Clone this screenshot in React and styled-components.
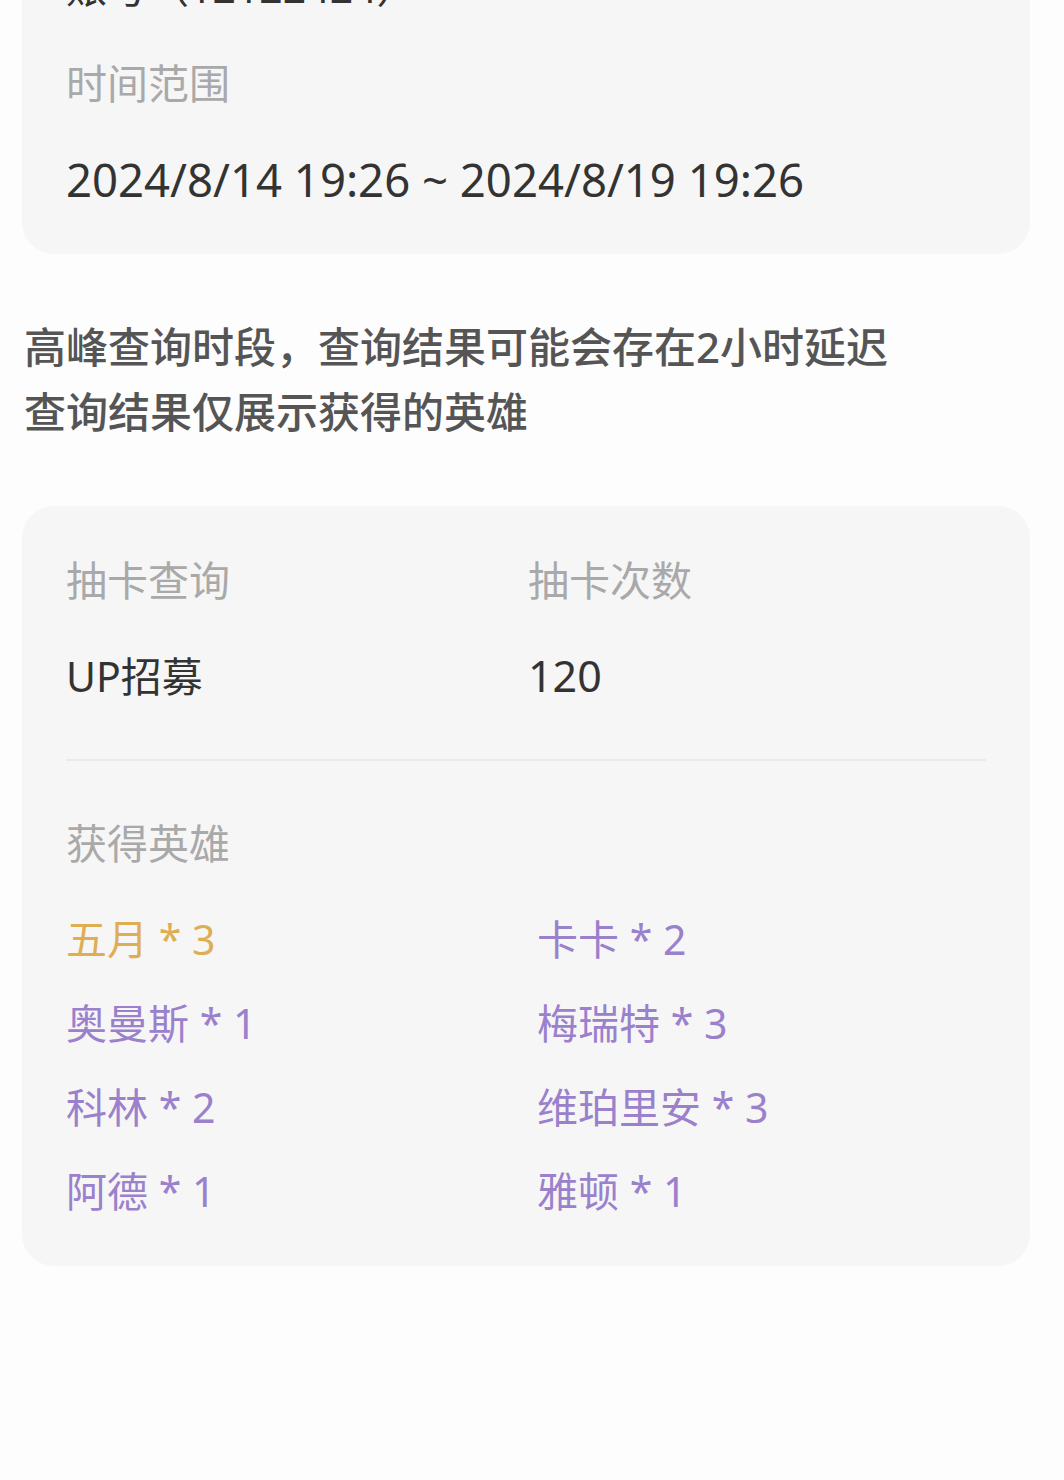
import React from 'react';
import styled, { createGlobalStyle } from 'styled-components';

const GlobalStyle = createGlobalStyle`
  html, body {
    margin: 0;
    padding: 0;
    background: #fdfdfd;
  }
  body {
    font-family: "Noto Sans", "Noto Sans CJK SC", sans-serif;
    -webkit-font-smoothing: antialiased;
  }
`;

const heroes = [
  { name: '五月', count: 3, gold: true },
  { name: '卡卡', count: 2 },
  { name: '奥曼斯', count: 1 },
  { name: '梅瑞特', count: 3 },
  { name: '科林', count: 2 },
  { name: '维珀里安', count: 3 },
  { name: '阿德', count: 1 },
  { name: '雅顿', count: 1 },
];

function App() {
  return (
    <>
      <GlobalStyle />
      <Page>
        <Card $first>
          <Field>
            <Label>游戏账号</Label>
            <Value>账号（12122424）</Value>
          </Field>
          <Field>
            <Label>时间范围</Label>
            <Value $size={45.5}>2024/8/14 19:26 ~ 2024/8/19 19:26</Value>
          </Field>
        </Card>

        <Notice>
          <p>高峰查询时段，查询结果可能会存在2小时延迟</p>
          <p>查询结果仅展示获得的英雄</p>
        </Notice>

        <Card>
          <HeadRow>
            <Field>
              <Label>抽卡查询</Label>
              <Value>UP招募</Value>
            </Field>
            <Field>
              <Label>抽卡次数</Label>
              <Value $size={43}>120</Value>
            </Field>
          </HeadRow>
          <Divider />
          <Field>
            <Label>获得英雄</Label>
            <HeroGrid>
              {heroes.map((h) => (
                <Hero key={h.name} $gold={h.gold}>
                  {h.name} * {h.count}
                </Hero>
              ))}
            </HeroGrid>
          </Field>
        </Card>
      </Page>
    </>
  );
}

export default App;

const Page = styled.div`
  display: flex;
  flex-direction: column;
  padding: 0 34px 200px 22px;
`;

const Card = styled.div`
  display: flex;
  flex-direction: column;
  gap: 40px;
  background: #f6f6f6;
  border-radius: 32px;
  padding: 46px 44px 47px;
  margin-top: ${(p) => (p.$first ? '-183px' : '0')};
`;

const Field = styled.div`
  display: flex;
  flex-direction: column;
  gap: 40px;
`;

const Label = styled.div`
  font-size: 41px;
  line-height: 56px;
  color: #a9a9a9;
`;

const Value = styled.div`
  font-size: ${(p) => p.$size || 41}px;
  line-height: 56px;
  color: #333333;
  white-space: nowrap;
`;

const Notice = styled.div`
  margin: 60px 0 62px 2px;
  p {
    margin: 0;
    font-size: 42px;
    line-height: 65px;
    font-weight: 500;
    color: #555555;
  }
`;

const HeadRow = styled.div`
  display: grid;
  grid-template-columns: 462px 1fr;
`;

const Divider = styled.div`
  height: 2px;
  background: #ebebeb;
  margin: 15px 0 14px;
`;

const HeroGrid = styled.div`
  display: grid;
  grid-template-columns: 471px 1fr;
  row-gap: 28px;
`;

const Hero = styled.div`
  font-size: 41px;
  line-height: 56px;
  color: ${(p) => (p.$gold ? '#dfae52' : '#9b80cc')};
  white-space: nowrap;
`;
